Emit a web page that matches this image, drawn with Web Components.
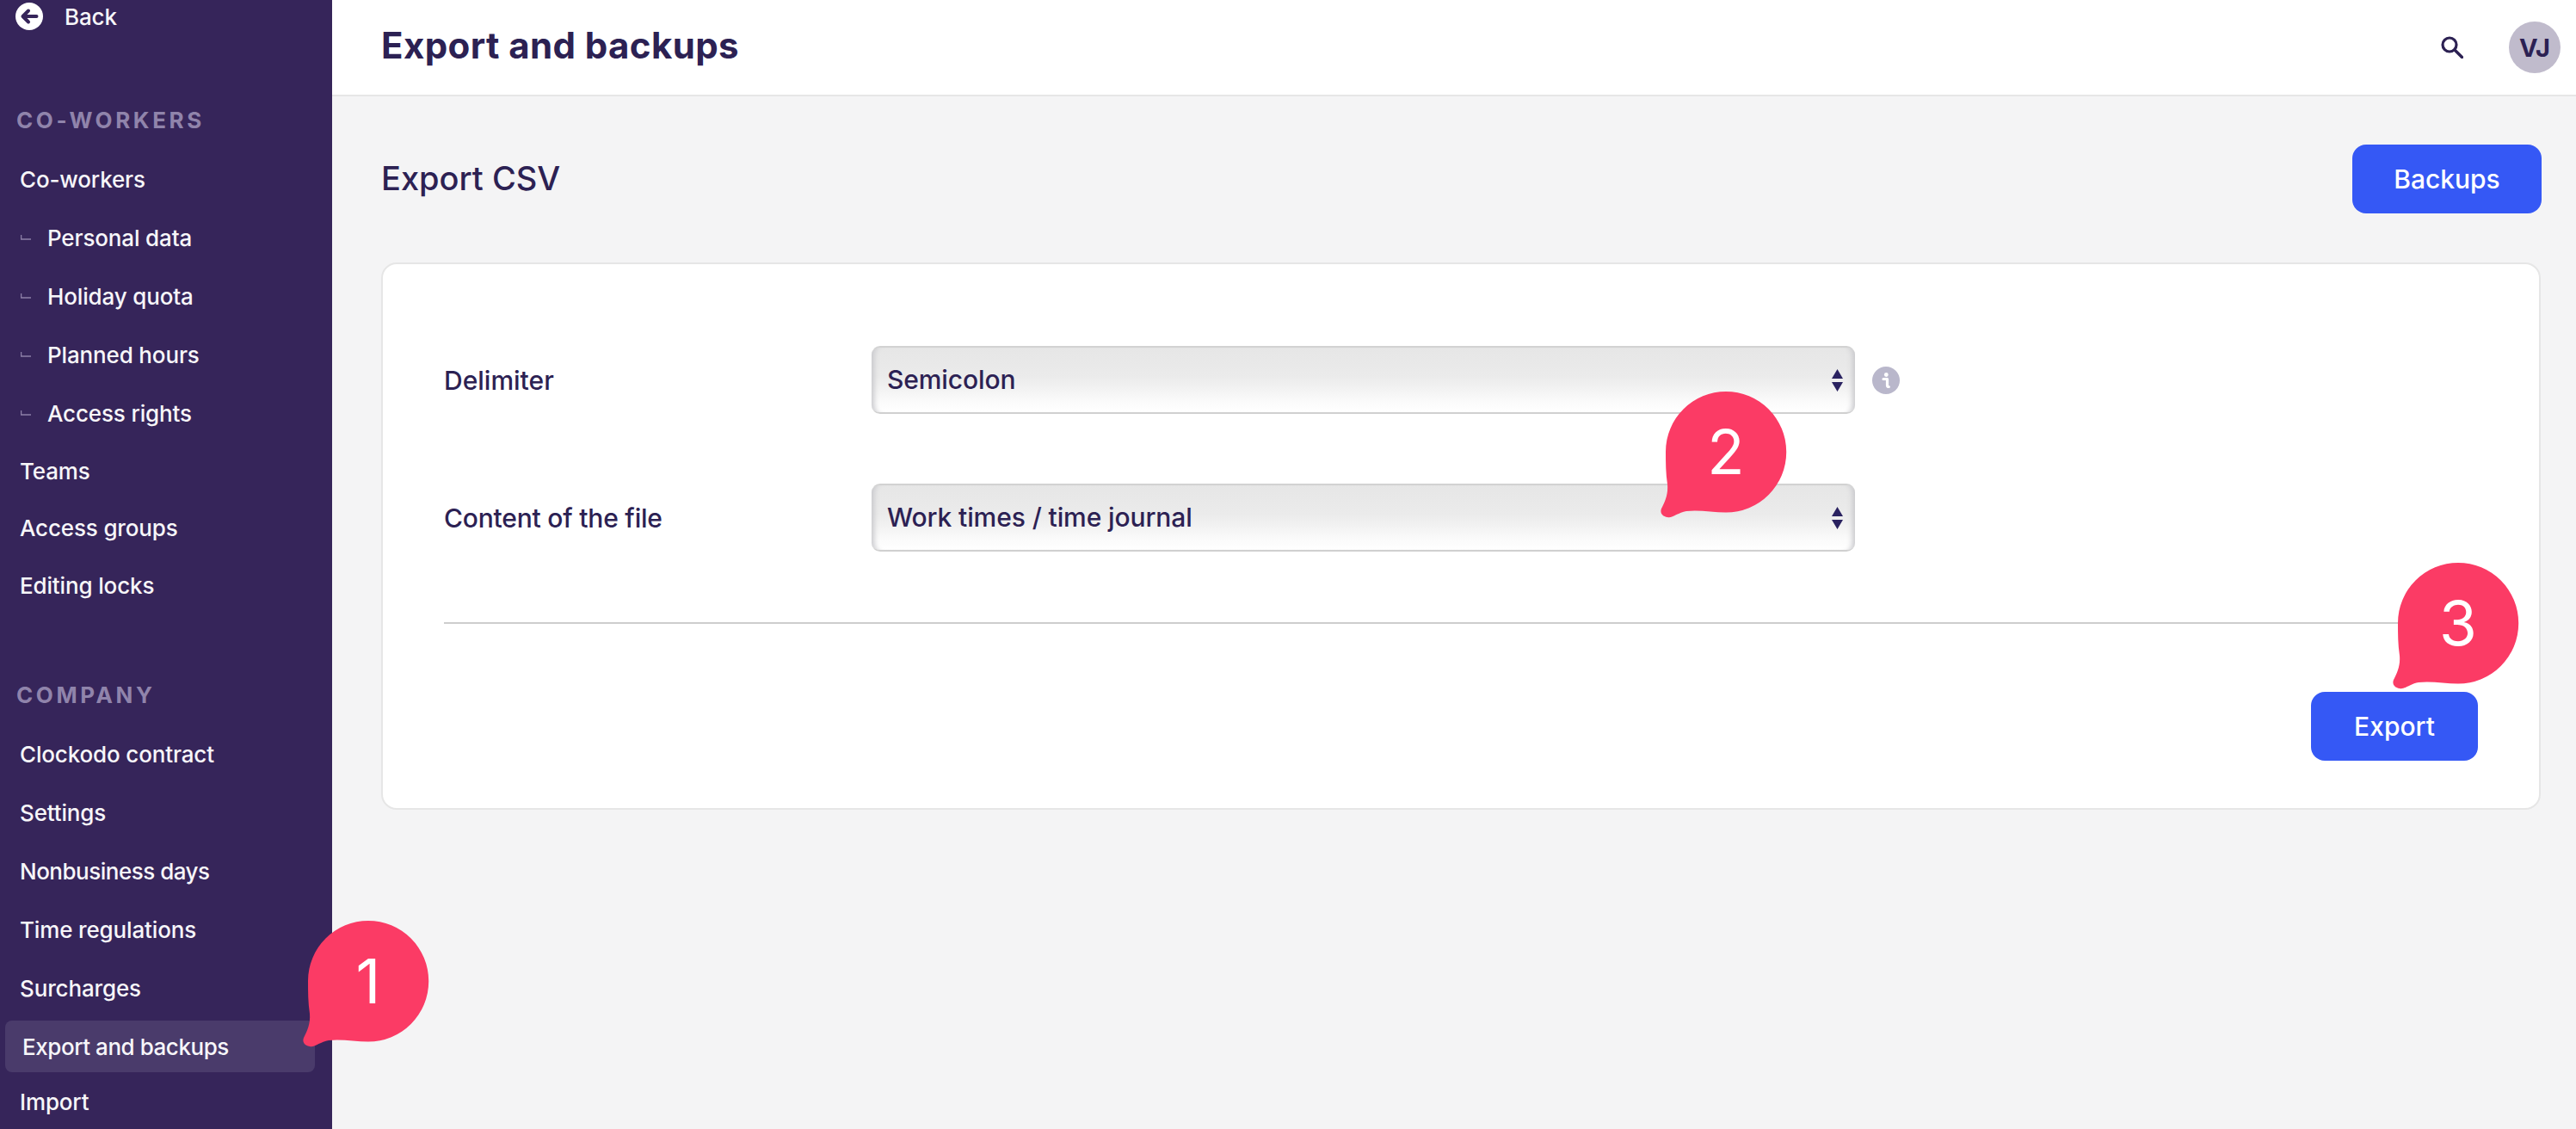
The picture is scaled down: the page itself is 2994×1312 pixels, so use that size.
<!DOCTYPE html>
<html lang="en">
<head>
<meta charset="utf-8">
<title>Export and backups</title>
<style>
  html, body { margin: 0; height: 100%; overflow: hidden; background: #f4f4f5; }
  body { font-family: Inter, "Liberation Sans", sans-serif; color: #2c2153; }
</style>
</head>
<body>
<app-shell>
  <side-nav slot="nav">
    <back-link>Back</back-link>
    <nav-heading style="--top:76px">Co-workers</nav-heading>
    <nav-item>Co-workers</nav-item>
    <nav-item sub>Personal data</nav-item>
    <nav-item sub>Holiday quota</nav-item>
    <nav-item sub>Planned hours</nav-item>
    <nav-item sub>Access rights</nav-item>
    <nav-item style="--h:67px">Teams</nav-item>
    <nav-item style="--h:65px">Access groups</nav-item>
    <nav-item>Editing locks</nav-item>
    <nav-heading style="--top:68px">Company</nav-heading>
    <nav-item>Clockodo contract</nav-item>
    <nav-item>Settings</nav-item>
    <nav-item style="--ls:-0.5px">Nonbusiness days</nav-item>
    <nav-item>Time regulations</nav-item>
    <nav-item>Surcharges</nav-item>
    <nav-item active style="--ls:-0.45px">Export and backups</nav-item>
    <nav-item style="--h:60px">Import</nav-item>
  </side-nav>

  <top-bar slot="bar" initials="VJ">Export and backups</top-bar>

  <section-head>
    Export CSV
    <app-button slot="action" style="--w:220px">Backups</app-button>
  </section-head>

  <form-card>
    <form-row label="Delimiter" info>
      <fake-select>Semicolon</fake-select>
    </form-row>
    <form-row label="Content of the file" style="--ls:-0.2px">
      <fake-select>Work times / time journal</fake-select>
    </form-row>
    <app-button slot="footer" style="--w:194px">Export</app-button>
  </form-card>

  <call-out slot="over" style="--x:358px;--y:1070px">1</call-out>
  <call-out slot="over" style="--x:1936px;--y:455px">2</call-out>
  <call-out slot="over" style="--x:2787px;--y:654px">3</call-out>
</app-shell>

<script>
// small helper so each component stays short
function shadow(el, html) {
  el.attachShadow({ mode: 'open' }).innerHTML = html;
}

class AppShell extends HTMLElement {
  constructor() {
    super();
    shadow(this, `
      <style>
        :host { display: grid; grid-template-columns: 386px 1fr; height: 1312px; overflow: hidden; position: relative; }
        .main { min-width: 0; display: flex; flex-direction: column; }
        .content { padding: 56px 40px 0 57px; }
      </style>
      <slot name="nav"></slot>
      <div class="main">
        <slot name="bar"></slot>
        <div class="content"><slot></slot></div>
      </div>
      <slot name="over"></slot>
    `);
  }
}

class SideNav extends HTMLElement {
  constructor() {
    super();
    shadow(this, `
      <style>
        :host { display: flex; flex-direction: column; background: #36255a; color: #f7f6f9; height: 1312px; overflow: hidden; font-size: 26px; font-weight: 500; letter-spacing: -0.15px; }
      </style>
      <slot></slot>
    `);
  }
}

class BackLink extends HTMLElement {
  constructor() {
    super();
    shadow(this, `
      <style>
        :host { display: flex; align-items: center; gap: 25px; height: 38px; padding-left: 18px; flex: none; }
        svg { width: 32px; height: 32px; display: block; }
      </style>
      <svg viewBox="0 0 32 32">
        <circle cx="16" cy="16" r="16" fill="#fff"/>
        <path d="M24.5 16H9M15 9.5 8.5 16l6.5 6.500" fill="none" stroke="#36255a" stroke-width="4" stroke-linecap="round" stroke-linejoin="round"/>
      </svg>
      <span><slot></slot></span>
    `);
  }
}

class NavHeading extends HTMLElement {
  constructor() {
    super();
    shadow(this, `
      <style>
        :host { display: block; flex: none; margin-top: var(--top, 80px); height: 52px; line-height: 52px; padding-left: 19px; padding-bottom: 8px; font-size: 26px; font-weight: 700; letter-spacing: 3.6px; text-transform: uppercase; color: #9084ab; }
      </style>
      <slot></slot>
    `);
  }
}

class NavItem extends HTMLElement {
  constructor() {
    super();
    const sub = this.hasAttribute('sub');
    shadow(this, `
      <style>
        :host { display: flex; flex: none; align-items: center; height: var(--h, 68px); padding-left: 23px; position: relative; white-space: nowrap; letter-spacing: var(--ls, -0.15px); }
        :host([sub]) { gap: 19px; padding-left: 24px; }
        :host([active]) { padding-left: 26px; }
        :host([active])::before { content: ""; position: absolute; left: 6px; width: 360px; height: 60px; top: 50%; transform: translateY(-50%); border-radius: 8px; background: #4a3b6b; }
        span { position: relative; }
        svg { width: 12px; height: 6px; display: block; }
      </style>
      ${sub ? '<svg viewBox="0 0 12 6"><path d="M.6 0v5H12" fill="none" stroke="#8d80a8" stroke-width="1.300"/></svg>' : ''}
      <span><slot></slot></span>
    `);
  }
}

class TopBar extends HTMLElement {
  constructor() {
    super();
    shadow(this, `
      <style>
        :host { display: flex; flex: none; align-items: center; justify-content: space-between; height: 110px; box-sizing: content-box; padding: 0 18px 0 57px; background: #fff; border-bottom: 2px solid #e6e6e6; }
        h1 { margin: 0 0 5px; font-size: 42px; font-weight: 700; letter-spacing: 0.4px; color: #2c2153; white-space: nowrap; }
        .tools { display: flex; align-items: center; gap: 53px; }
        svg { width: 26px; height: 26px; display: block; }
        .avatar { width: 60px; height: 60px; border-radius: 50%; background: #c0bbcc; display: flex; align-items: center; justify-content: center; font-size: 29px; font-weight: 700; color: #2c2153; }
      </style>
      <h1><slot></slot></h1>
      <div class="tools">
        <svg viewBox="0 0 26 26"><circle cx="10" cy="10" r="8" fill="none" stroke="#2c2153" stroke-width="3.200"/><path d="M16 16l8.500 8.500" stroke="#2c2153" stroke-width="3.400" stroke-linecap="round"/></svg>
        <div class="avatar">${this.getAttribute('initials')}</div>
      </div>
    `);
  }
}

class SectionHead extends HTMLElement {
  constructor() {
    super();
    shadow(this, `
      <style>
        :host { display: flex; align-items: center; justify-content: space-between; height: 80px; margin-bottom: 57px; font-size: 38px; font-weight: 500; color: #2c2153; }
        span { margin-bottom: 3px; }
      </style>
      <span><slot></slot></span>
      <slot name="action"></slot>
    `);
  }
}

class AppButton extends HTMLElement {
  constructor() {
    super();
    shadow(this, `
      <style>
        :host { display: flex; align-items: center; justify-content: center; width: var(--w, 200px); height: 80px; border-radius: 16px; background: #3558f5; color: #fff; font-size: 30px; font-weight: 500; }
      </style>
      <slot></slot>
    `);
  }
}

class FormCard extends HTMLElement {
  constructor() {
    super();
    shadow(this, `
      <style>
        :host { display: block; box-sizing: border-box; width: 2510px; height: 636px; background: #fff; border: 2px solid #e6e6e6; border-radius: 18px; padding: 95px 71px 0; }
        .rows { display: flex; flex-direction: column; gap: 81px; }
        hr { border: 0; height: 2px; background: #cdcdcd; margin: 82px 0 79px; }
        .foot { display: flex; justify-content: flex-end; }
      </style>
      <div class="rows"><slot></slot></div>
      <hr>
      <div class="foot"><slot name="footer"></slot></div>
    `);
  }
}

class FormRow extends HTMLElement {
  constructor() {
    super();
    const info = this.hasAttribute('info');
    shadow(this, `
      <style>
        :host { display: grid; grid-template-columns: 497px 1143px auto; align-items: center; font-size: 30px; font-weight: 500; color: #2c2153; }
        .label { letter-spacing: var(--ls, 0); }
        svg { width: 32px; height: 32px; margin-left: 20px; display: block; }
      </style>
      <span class="label">${this.getAttribute('label')}</span>
      <slot></slot>
      ${info ? `<svg viewBox="0 0 32 32"><circle cx="16" cy="16" r="16" fill="#b9b7cb"/><circle cx="16.300" cy="9.500" r="2.400" fill="#fff"/><path d="M13 14.500h4.500v7.500c0 1 .6 1.500 1.800 1.500" fill="none" stroke="#fff" stroke-width="3.200" stroke-linecap="round" stroke-linejoin="round"/></svg>` : ''}
    `);
  }
}

class FakeSelect extends HTMLElement {
  constructor() {
    super();
    shadow(this, `
      <style>
        :host { display: flex; align-items: center; justify-content: space-between; box-sizing: border-box; height: 79px; padding: 0 14px 0 18px; border-radius: 10px; border-top: 2px solid #d2d2d2; border-bottom: 2px solid #d0d0d0; background: linear-gradient(#e6e6e6 0%, #ebebeb 45%, #fbfbfb 85%, #fff 100%); box-shadow: inset 9px 0 6px -6px #c8c8cc, inset -9px 0 6px -6px #c8c8cc; font-size: 30px; font-weight: 500; letter-spacing: -0.1px; color: #2c2153; }
        span { margin-bottom: 2px; }
        svg { width: 13px; height: 26px; display: block; }
      </style>
      <span><slot></slot></span>
      <svg viewBox="0 0 13 26"><path d="M6.500 0 13 11H0zM0 15h13L6.500 26z" fill="#2a2260"/></svg>
    `);
  }
}

// speech bubbles lie over the page, so these are the only placed items
class CallOut extends HTMLElement {
  constructor() {
    super();
    shadow(this, `
      <style>
        :host { position: absolute; left: var(--x); top: var(--y); width: 140px; height: 140px; display: flex; align-items: center; justify-content: center; color: #fff; font-size: 71px; font-weight: 400; }
        svg { position: absolute; left: -8px; top: 0; width: 148px; height: 148px; overflow: visible; }
        span { position: relative; }
      </style>
      <svg viewBox="-8 0 148 148"><path d="M70 0A70 70 0 0 1 70 140.500C55 140.500 38 137 24 139 14 140.500 8 147.500 2 146-4 145-7 141-5 136-1 128 3 120 2 108 0 95 0 82 0 70A70 70 0 0 1 70 0Z" fill="#fb3b65"/></svg>
      <span><slot></slot></span>
    `);
  }
}

customElements.define('app-shell', AppShell);
customElements.define('side-nav', SideNav);
customElements.define('back-link', BackLink);
customElements.define('nav-heading', NavHeading);
customElements.define('nav-item', NavItem);
customElements.define('top-bar', TopBar);
customElements.define('section-head', SectionHead);
customElements.define('app-button', AppButton);
customElements.define('form-card', FormCard);
customElements.define('form-row', FormRow);
customElements.define('fake-select', FakeSelect);
customElements.define('call-out', CallOut);
</script>
</body>
</html>
